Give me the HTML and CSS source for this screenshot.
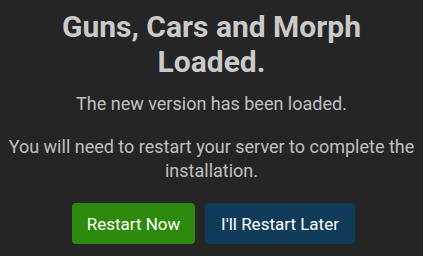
FILE: index.html
```html
<!DOCTYPE html>
<html>
<head>
<meta charset="utf-8">
<link rel="stylesheet" href="styles.css">
</head>
<body>
<div class="dialog">
  <h1 class="title">Guns, Cars and Morph Loaded.</h1>
  <p class="msg">The new version has been loaded.</p>
  <p class="msg msg-gap">You will need to restart your server to complete the installation.</p>
  <div class="actions">
    <button class="btn btn-green">Restart Now</button>
    <button class="btn btn-blue">I'll Restart Later</button>
  </div>
</div>
</body>
</html>
```
FILE: styles.css
```css
html, body {
  margin: 0;
  padding: 0;
  background: #252525;
  height: 100%;
  overflow: hidden;
}
.dialog {
  display: flex;
  flex-direction: column;
  align-items: center;
  text-align: center;
  font-family: Roboto, "Liberation Sans", sans-serif;
  padding: 9px 0 0;
}
.title {
  margin: 0;
  width: 340px;
  font-size: 30px;
  line-height: 35px;
  font-weight: 700;
  color: #cacaca;
}
.msg {
  margin: 13px 0 0;
  font-size: 18px;
  line-height: 24px;
  color: #c0c0c0;
}
.msg-gap { margin-top: 19px; }
.actions {
  display: flex;
  gap: 10px;
  margin-top: 20px;
  margin-left: 4px;
}
.btn {
  font-family: Roboto, "Liberation Sans", sans-serif;
  font-size: 17px;
  color: #ffffff;
  border: none;
  border-radius: 4px;
  height: 41px;
  padding: 0;
  white-space: nowrap;
}
.btn-green { background: #2e8a0d; width: 123px; }
.btn-blue { background: #103b59; width: 150px; }
```
